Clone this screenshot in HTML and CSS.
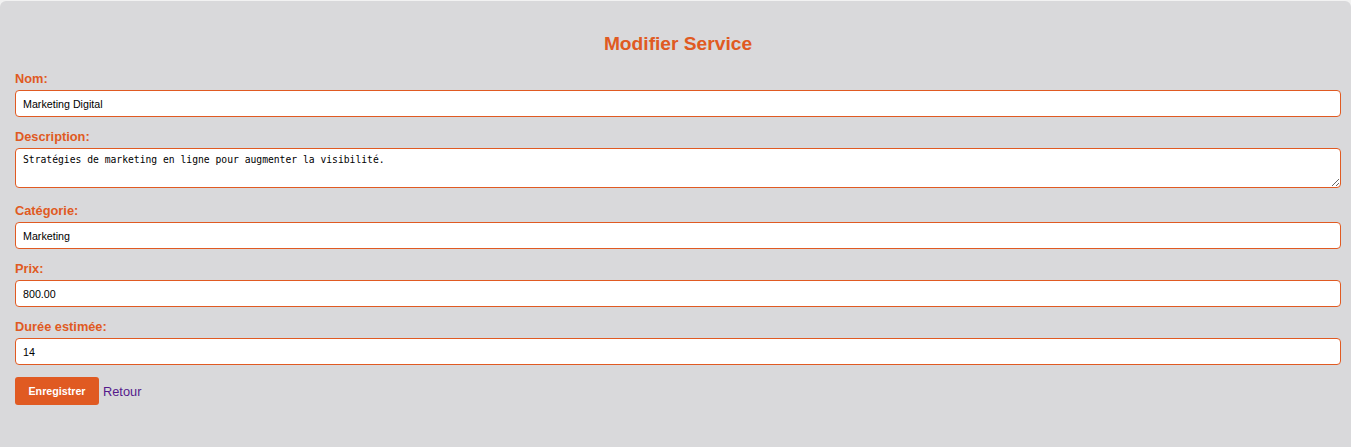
FILE: index.html
```html
<!DOCTYPE html>
<html lang="fr">
<head>
    <meta charset="UTF-8">
    <meta name="viewport" content="width=device-width, initial-scale=1.0">
    <title>Modifier Service</title>
    <link rel="stylesheet" href="styles.css">
</head>
<body>
    <div class="container">
        <h2>Modifier Service</h2>
        <form action="#" method="post">
            <label for="nom">Nom:</label>
            <input type="text" id="nom" name="nom" value="Marketing Digital">

            <label for="description">Description:</label>
            <textarea id="description" name="description">Stratégies de marketing en ligne pour augmenter la visibilité.</textarea>

            <label for="categorie">Catégorie:</label>
            <input type="text" id="categorie" name="categorie" value="Marketing">

            <label for="prix">Prix:</label>
            <input type="text" id="prix" name="prix" value="800.00">

            <label for="duree">Durée estimée:</label>
            <input type="text" id="duree" name="duree" value="14">

            <div class="actions">
                <button type="submit">Enregistrer</button>
                <a href="#" class="back-link">Retour</a>
            </div>
        </form>
    </div>
</body>
</html>
```

FILE: styles.css
```css
body {
    margin: 0;
    background-color: #f2f2f2;
    font-family: "Liberation Sans", Arial, sans-serif;
}

.container {
    margin-top: 1px;
    min-height: 446px;
    box-sizing: border-box;
    background-color: #d9d9db;
    border-radius: 6px 6px 0 0;
    padding: 16px 10px 16px 15px;
}

h2 {
    color: #e05a22;
    font-size: 19.2px;
    text-align: center;
    margin: 16px 0;
    line-height: 22px;
}

form {
    display: flex;
    flex-direction: column;
}

label {
    color: #e05a22;
    font-weight: bold;
    font-size: 12.8px;
    line-height: 15px;
    margin-bottom: 4px;
}

input, textarea {
    box-sizing: border-box;
    width: 100%;
    border: 1px solid #e05a22;
    border-radius: 4px;
    background-color: #fff;
    color: #000;
    margin-bottom: 12px;
}

input {
    height: 27px;
    padding: 0 7px;
    font-family: "Liberation Sans", Arial, sans-serif;
    font-size: 10.7px;
}

textarea {
    height: 40px;
    padding: 5px 7px;
    font-family: "DejaVu Sans Mono", monospace;
    font-size: 9.7px;
    margin-bottom: 15px;
}

.actions {
    display: flex;
    align-items: center;
    gap: 4px;
}

.actions button {
    background-color: #e05a22;
    color: white;
    border: none;
    border-radius: 3px;
    height: 28px;
    width: 84px;
    font-family: "Liberation Sans", Arial, sans-serif;
    font-weight: bold;
    font-size: 10.7px;
    cursor: pointer;
}

.back-link {
    color: #551a8b;
    font-size: 12.8px;
    text-decoration: none;
}
```
